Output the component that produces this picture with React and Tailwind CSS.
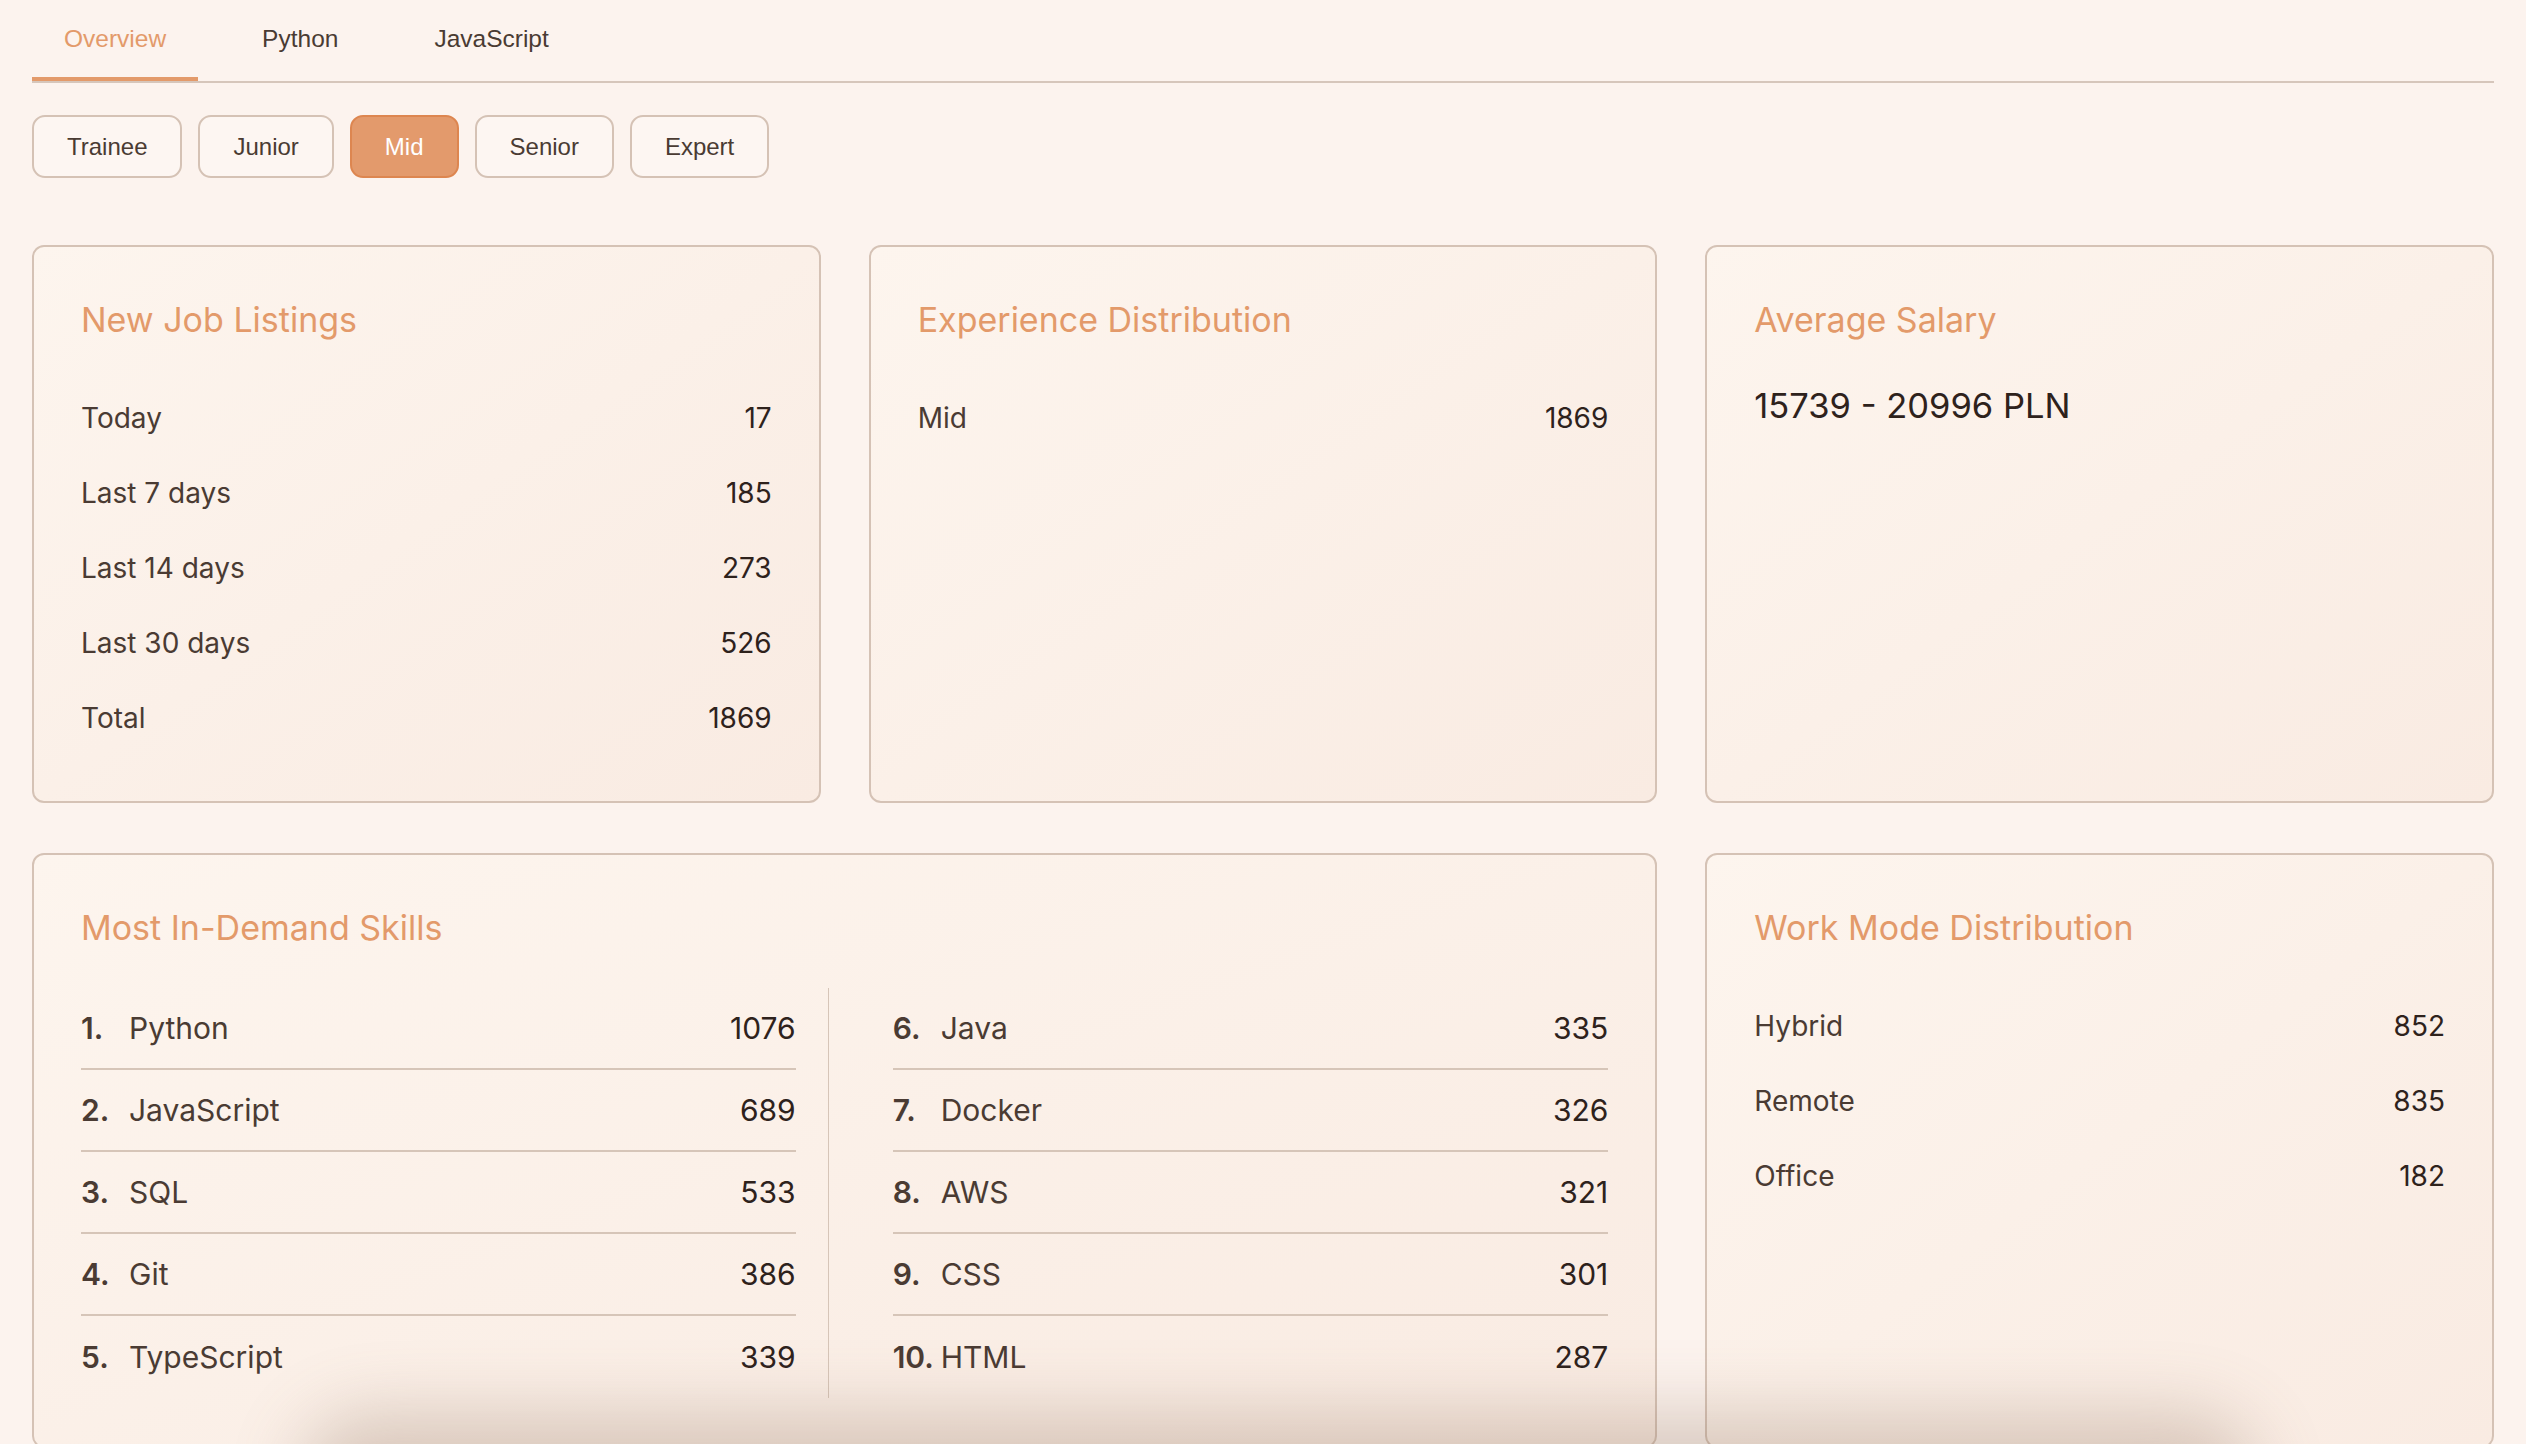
import React, { useState } from 'react';

const tabs = ['Overview', 'Python', 'JavaScript'];
const levels = ['Trainee', 'Junior', 'Mid', 'Senior', 'Expert'];

const listings = [
    ['Today', 17],
    ['Last 7 days', 185],
    ['Last 14 days', 273],
    ['Last 30 days', 526],
    ['Total', 1869],
];

const skills = [
    ['Python', 1076],
    ['JavaScript', 689],
    ['SQL', 533],
    ['Git', 386],
    ['TypeScript', 339],
    ['Java', 335],
    ['Docker', 326],
    ['AWS', 321],
    ['CSS', 301],
    ['HTML', 287],
];

const workModes = [
    ['Hybrid', 852],
    ['Remote', 835],
    ['Office', 182],
];

const Card = ({ title, className = '', children }) => (
    <div className={`rounded-xl border-2 border-[#d5c2b5] bg-gradient-to-br from-[#fdf5ee] to-[#f9ebe2] px-[47px] pt-[53px] ${className}`}>
        <h2 className="text-[34px] leading-[40px] font-normal text-[#e39a6a]">{title}</h2>
        {children}
    </div>
);

const StatRow = ({ label, value }) => (
    <div className="flex h-[75px] items-center justify-between text-[28px]">
        <span className="text-[#4a3b33]">{label}</span>
        <span className="text-[#2e221c]">{value}</span>
    </div>
);

const SkillColumn = ({ items, offset, className }) => (
    <div className={className}>
        {items.map(([name, count], i) => (
            <div
                key={name}
                className={`flex h-[82px] items-center justify-between text-[30px] ${i < items.length - 1 ? 'border-b-2 border-[#d6c5b8]' : ''}`}
            >
                <div className="flex items-center">
                    <span className="w-12 font-semibold text-[#4a3b33]">{offset + i + 1}.</span>
                    <span className="text-[#4a3b33]">{name}</span>
                </div>
                <span className="text-[#2e221c]">{count}</span>
            </div>
        ))}
    </div>
);

export default function App() {
    const [activeTab, setActiveTab] = useState('Overview');
    const [level, setLevel] = useState('Mid');

    return (
        <div className="relative h-screen overflow-hidden bg-[#fcf3ee] px-8 font-['Inter',sans-serif]">
            {/* Tabs */}
            <nav className="flex gap-8 border-b-2 border-[#d6c6bb] font-['Liberation_Sans',Arial,sans-serif]">
                {tabs.map(tab => (
                    <button
                        key={tab}
                        onClick={() => setActiveTab(tab)}
                        className={`border-b-4 px-8 pt-[23px] pb-[22px] text-[24.5px] leading-[32px] ${activeTab === tab ? 'border-[#e39a6a] text-[#e39a6a]' : 'border-transparent text-[#4a3b33]'}`}
                    >
                        {tab}
                    </button>
                ))}
            </nav>

            {/* Level filter */}
            <div className="mt-8 flex gap-4 font-['Liberation_Sans',Arial,sans-serif]">
                {levels.map(l => (
                    <button
                        key={l}
                        onClick={() => setLevel(l)}
                        className={`flex h-[63px] items-center rounded-[13px] border-2 px-[33px] text-[24px] ${level === l ? 'border-[#dd8650] bg-[#e39a6c] text-white' : 'border-[#d5c2b5] bg-[#fdf6f2] text-[#4a3b33]'}`}
                    >
                        {l}
                    </button>
                ))}
            </div>

            <div className="mt-[67px] grid grid-cols-3 gap-x-12 gap-y-[50px]">
                <Card title="New Job Listings" className="h-[558px]">
                    <div className="mt-10">
                        {listings.map(([label, value]) => (
                            <StatRow key={label} label={label} value={value} />
                        ))}
                    </div>
                </Card>

                <Card title="Experience Distribution" className="h-[558px]">
                    <div className="mt-10">
                        <StatRow label={level} value={1869} />
                    </div>
                </Card>

                <Card title="Average Salary" className="h-[558px]">
                    <p className="mt-[46px] text-[34.5px] leading-[40px] text-[#2e221c]">15739 - 20996 PLN</p>
                </Card>

                <Card title="Most In-Demand Skills" className="col-span-2 pb-12">
                    <div className="mt-10 grid grid-cols-2 gap-8">
                        <SkillColumn items={skills.slice(0, 5)} offset={0} className="border-r border-[#d6c5b8] pr-8" />
                        <SkillColumn items={skills.slice(5)} offset={5} className="pl-8" />
                    </div>
                </Card>

                <Card title="Work Mode Distribution" className="pb-12">
                    <div className="mt-10">
                        {workModes.map(([label, value]) => (
                            <StatRow key={label} label={label} value={value} />
                        ))}
                    </div>
                </Card>
            </div>

            {/* soft shadow coming up from below the fold */}
            <div className="pointer-events-none fixed left-[330px] right-[300px] top-[1444px] h-[80px] rounded-full shadow-[0_0_70px_30px_rgba(140,110,90,0.3)]" />
        </div>
    );
}
